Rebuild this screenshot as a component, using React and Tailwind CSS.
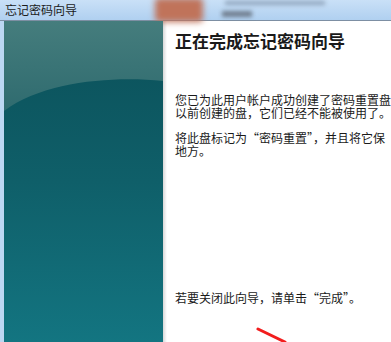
export default function App() {
  const font = { fontFamily: '"Noto Sans CJK SC", "Noto Sans", sans-serif' };
  return (
    <div className="relative w-[391px] h-[342px] overflow-hidden flex flex-col bg-[#bcd7f2]" style={font}>
      {/* title bar */}
      <div className="relative h-[21px] flex items-center bg-gradient-to-b from-[#c9e0f7] to-[#b0d0f0] border-b border-[#7d8fa3]">
        <span className="pl-[5px] text-[12px] leading-none text-[#1b1b1b]">忘记密码向导</span>
        <div className="absolute left-[155px] top-[-2px] w-[48px] h-[24px] bg-[#c0735a] blur-[3px] rounded-sm" />
        <div className="absolute left-[225px] top-[1px] w-[100px] h-[4px] bg-[#8fa3bb] blur-[2px]" />
        <div className="absolute left-[222px] top-[11px] w-[30px] h-[6px] bg-[#6f7d8e] blur-[2px]" />
      </div>
      <div className="flex flex-1 pl-[4px]">
        {/* left art panel */}
        <div className="relative w-[159px] bg-gradient-to-b from-[#0b5059] via-[#0f5f69] to-[#137581] overflow-hidden">
          <svg className="absolute inset-0" width="159" height="321" viewBox="0 0 159 321">
            <defs>
              <linearGradient id="top" x1="0" y1="0" x2="0" y2="1">
                <stop offset="0" stopColor="#457d7d" />
                <stop offset="1" stopColor="#2f6b6f" />
              </linearGradient>
            </defs>
            <path d="M0 0 H159 V60 C110 55 40 60 0 90 Z" fill="url(#top)" />
          </svg>
        </div>
        <div className="w-[4px] bg-gradient-to-r from-[#d8d8d8] to-[#ffffff]" />
        {/* content */}
        <div className="flex-1 bg-white pl-[8px] flex flex-col text-[#1a1a1a]">
          <div className="mt-[10px] text-[17px] font-bold leading-[20px] whitespace-nowrap">正在完成忘记密码向导</div>
          <div className="mt-[42px] text-[12px] leading-[13px] whitespace-nowrap">
            <div>您已为此用户帐户成功创建了密码重置盘</div>
            <div>以前创建的盘，它们已经不能被使用了。</div>
          </div>
          <div className="mt-[12px] text-[12px] leading-[13px] whitespace-nowrap">
            <div>将此盘标记为“密码重置”，并且将它保</div>
            <div>地方。</div>
          </div>
          <div className="mt-[134px] text-[12px] leading-[13px] whitespace-nowrap">若要关闭此向导，请单击“完成”。</div>
        </div>
      </div>
      <svg className="absolute left-[255px] top-[325px]" width="40" height="20" viewBox="0 0 40 20">
        <path d="M3 4 L30 17" stroke="#f21d1d" strokeWidth="3" strokeLinecap="round" />
      </svg>
    </div>
  );
}
